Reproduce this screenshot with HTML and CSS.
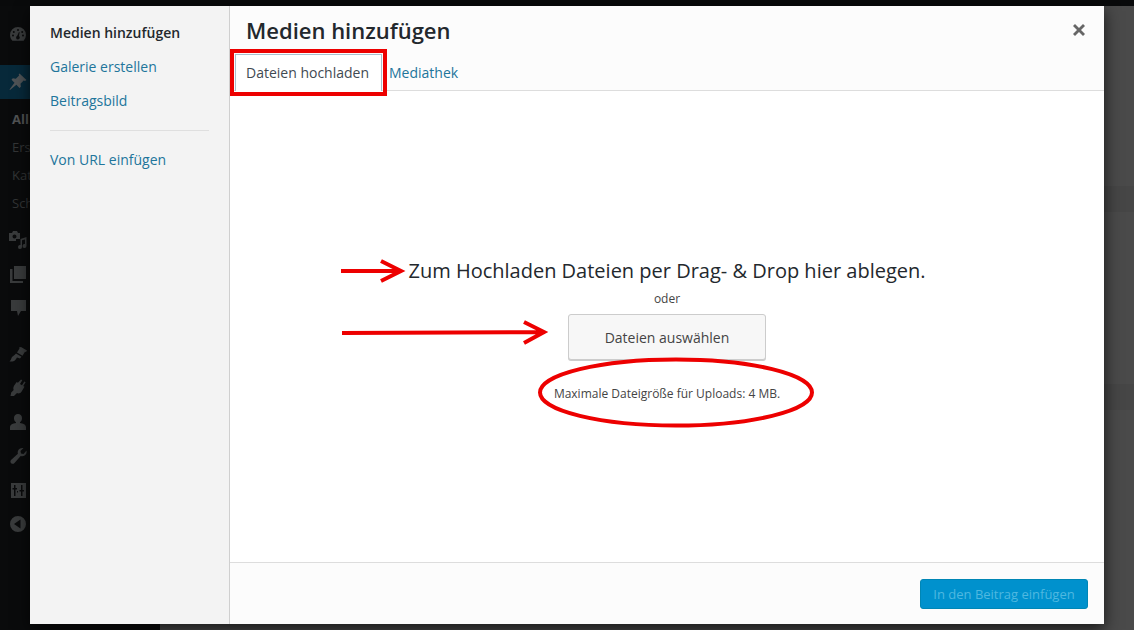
FILE: index.html
```html
<!DOCTYPE html>
<html lang="de">
<head>
  <meta charset="UTF-8" />
  <title>Medien hinzufügen</title>
  <link rel="stylesheet" href="styles.css">
</head>
<body>
  <div class="adminbar"></div>
  <div class="admin">
    <nav class="menu">
      <div class="menu-item">
        <svg viewBox="0 0 20 20"><path d="M10 2a8 8 0 0 0-8 8c0 2.200.9 4.300 2.400 5.700h11.200A8 8 0 0 0 18 10a8 8 0 0 0-8-8zM10 4a1 1 0 1 1 0 2 1 1 0 0 1 0-2zM5.800 6a1 1 0 1 1 0 2 1 1 0 0 1 0-2zM14.200 6a1 1 0 1 1 0 2 1 1 0 0 1 0-2zM4 10.500a1 1 0 1 1 2 0 1 1 0 0 1-2 0zM14 10.500a1 1 0 1 1 2 0 1 1 0 0 1-2 0zM10 14.500a2 2 0 0 1-.8-3.800L11 7l.6.3-.6 3.600a2 2 0 0 1-1 3.600z"/></svg>
      </div>
      <div class="menu-item current">
        <svg viewBox="0 0 20 20"><path d="M11.500 1.500l7 6.500-1.500 1-1.300-.4-3.200 3.200.4 3-1.400 1.300-3.100-3.300L2 18l-.5-.5 5-6.700-3-3 1.300-1.500 3 .4 3.300-3.200-.4-1.300z"/></svg>
      </div>
      <ul class="submenu">
        <li class="active">All</li>
        <li>Ers</li>
        <li>Kat</li>
        <li>Sch</li>
      </ul>
      <div class="menu-item">
        <svg viewBox="0 0 20 20"><path d="M1 3h3l1-2h4l1 2h2v6H8v2H1zM6.500 4.500a2 2 0 1 0 0 4 2 2 0 0 0 0-4zM18.500 7v9a2 2 0 1 1-1.500-1.900V9.500l-3 .8V17a2 2 0 1 1-1.500-1.900V9z"/></svg>
      </div>
      <div class="menu-item">
        <svg viewBox="0 0 20 20"><path d="M6 2h12v13H6zM2 5h2.500v12H15v2H2z"/></svg>
      </div>
      <div class="menu-item gap">
        <svg viewBox="0 0 20 20"><path d="M3 2h15v11h-5l-3 5-1-5H3z"/></svg>
      </div>
      <div class="menu-item">
        <svg viewBox="0 0 20 20"><path d="M13 3l6 3.500-1 1.500-1-.3-2.500 4-5.500-3.300 2.500-4-.5-1zM8 9.500l5.500 3.300-1.500 1.800-3-1c-1 1.500-2 4-4.500 4H1.500c1.500-1 1.500-3 2.500-4.500l2.500-2z"/></svg>
      </div>
      <div class="menu-item">
        <svg viewBox="0 0 20 20"><path d="M13 1.500l1.300.8-2.300 3.700 2 1.200 2.300-3.700 1.300.8-2.300 3.700 1.200.8-3 5c-1 1.600-3 2-4.500 1.300L6 18H2.500l.7-3.500 2.500-2.500c-.7-1.500-.4-3 .5-4.500l2.500-3.500 1.200.8z"/></svg>
      </div>
      <div class="menu-item">
        <svg viewBox="0 0 20 20"><path d="M10 2a4 4 0 0 1 4 4.500c0 1.500-.8 3-2 3.700v.8c3 .5 6 1.500 6 4V18H2v-3c0-2.500 3-3.500 6-4v-.8c-1.200-.7-2-2.200-2-3.700A4 4 0 0 1 10 2z"/></svg>
      </div>
      <div class="menu-item">
        <svg viewBox="0 0 20 20"><path d="M18.500 4.500c.5 2-.2 4-1.800 5-1.200.8-2.700.9-4 .4L6.500 17c-.8 1-2.300 1.200-3.300.3s-1-2.300-.2-3.200l6.900-6.300c-.4-1.300-.2-2.800.7-4 1.100-1.500 3-2.200 4.900-1.700L12.500 5l.5 2.500 2.500.5z"/></svg>
      </div>
      <div class="menu-item">
        <svg viewBox="0 0 20 20"><path fill-rule="evenodd" d="M3 3h15v15H3zM6 5v3H4.500v1.500H6V16h1.500V9.500H9V8H7.500V5zM13 5v5h-1.500v1.500H13V16h1.500v-4.500H16V10h-1.500V5zM9 11v1.500h1V11z"/></svg>
      </div>
      <div class="menu-item">
        <svg viewBox="0 0 20 20"><path fill-rule="evenodd" d="M10 2a8 8 0 1 1 0 16 8 8 0 0 1 0-16zM12.500 5.500L6 10l6.500 4.500z"/></svg>
      </div>
    </nav>
    <main class="wpbody">
      <div class="stripe"></div>
      <div class="stripe"></div>
    </main>
  </div>

  <div class="modal">
    <aside class="media-menu">
      <a class="media-link selected">Medien hinzufügen</a>
      <a class="media-link">Galerie erstellen</a>
      <a class="media-link">Beitragsbild</a>
      <div class="separator"></div>
      <a class="media-link">Von URL einfügen</a>
    </aside>
    <section class="frame">
      <button class="close" aria-label="Schließen">
        <svg viewBox="0 0 14 14" width="14" height="14"><path d="M3 1l4 4 4-4 2 2-4 4 4 4-2 2-4-4-4 4-2-2 4-4-4-4z"/></svg>
      </button>
      <h1 class="frame-title">Medien hinzufügen</h1>
      <div class="tabs">
        <a class="tab active">Dateien hochladen</a>
        <a class="tab">Mediathek</a>
      </div>
      <div class="uploader">
        <h2 class="drop-text">Zum Hochladen Dateien per Drag- &amp; Drop hier ablegen.</h2>
        <p class="or">oder</p>
        <button class="select-btn">Dateien auswählen</button>
        <p class="max-size">Maximale Dateigröße für Uploads: 4 MB.</p>
      </div>
      <div class="toolbar">
        <button class="insert-btn">In den Beitrag einfügen</button>
      </div>
    </section>
  </div>

  <!-- hand drawn annotations on top of the screenshot -->
  <svg class="marks" width="1134" height="630" viewBox="0 0 1134 630">
    <rect x="232" y="51" width="153" height="43"/>
    <path d="M341 271H400M381 261L401 271L381 281"/>
    <path d="M342 333L543 332M524 322L544 332L524 343"/>
    <ellipse cx="676" cy="392.500" rx="136" ry="33"/>
  </svg>
</body>
</html>
```

FILE: styles.css
```css
* { box-sizing: border-box; }

html, body { height: 100%; }

body {
  margin: 0;
  font-family: "Open Sans", sans-serif;
  background: #4a4a4a;
  overflow: hidden;
  position: relative;
}

.adminbar { height: 6px; background: #090a0b; }

.admin { display: flex; height: 624px; }

.menu {
  width: 160px;
  flex: none;
  background: #0a0b0c;
  padding-top: 12px;
}
.menu-item { height: 34px; padding-left: 8px; display: flex; align-items: center; }
.menu-item svg { width: 20px; height: 20px; fill: #393b3c; }
.menu-item.current { background: #07293a; margin-top: 13px; }
.menu-item.current svg { fill: #4f5356; }
.menu-item.gap { margin-bottom: 12px; }

.submenu { list-style: none; margin: 0; padding: 6px 0; font-size: 13px; color: #333536; }
.submenu li { height: 28px; line-height: 28px; padding-left: 12px; white-space: nowrap; }
.submenu .active { font-weight: 700; color: #505253; }

.wpbody { flex: 1; padding-top: 180px; }
.stripe { height: 26px; margin-bottom: 172px; background: #464646; }

.modal {
  position: absolute;
  left: 30px;
  top: 6px;
  width: 1074px;
  height: 618px;
  display: flex;
  background: #fff;
  box-shadow: 0 5px 15px rgba(0, 0, 0, 0.7);
}

.media-menu {
  width: 200px;
  flex: none;
  background: #f3f3f3;
  border-right: 1px solid #cfcfcf;
  padding: 10px 20px 0;
}
.media-link { display: block; height: 34px; font-size: 14px; line-height: 34px; color: #21759b; }
.media-link.selected { color: #23282d; font-weight: 600; }
.separator { height: 1px; background: #dfdfdf; margin: 12px 0 12px; }

.frame { flex: 1; position: relative; display: flex; flex-direction: column; min-width: 0; background: #fcfcfc; }

.close {
  position: absolute;
  right: 18px;
  top: 17px;
  width: 14px;
  height: 14px;
  padding: 0;
  border: 0;
  background: none;
}
.close svg { display: block; fill: #666; }

.frame-title { margin: 0; padding: 6px 16px 0; height: 44px; font-size: 22px; font-weight: 600; line-height: 36px; color: #23282d; }

.tabs { display: flex; height: 41px; padding-left: 5px; border-bottom: 1px solid #ddd; }
.tab { height: 38px; margin-top: 4px; padding: 0 10px 0 7px; font-size: 14px; line-height: 38px; color: #21759b; }
.tab.active { width: 147px; padding-left: 10px; background: #fff; border: 1px solid #a9bfce; line-height: 36px; color: #3f4a52; }

.uploader { flex: 1; background: #fff; text-align: center; padding-top: 165px; }
.drop-text { margin: 0; font-size: 20px; font-weight: 400; line-height: 30px; color: #23282d; }
.or { margin: 3px 0 0; font-size: 12px; line-height: 20px; color: #444; }
.select-btn {
  display: block;
  width: 198px;
  height: 46px;
  margin: 5px auto 0;
  border: 1px solid #ccc;
  border-radius: 3px;
  background: #f7f7f7;
  box-shadow: 0 1px 0 #ccc;
  font: 14px "Open Sans", sans-serif;
  color: #444;
}
.max-size { margin: 25px 0 0; font-size: 12px; line-height: 18px; color: #444; }

.toolbar {
  height: 62px;
  flex: none;
  display: flex;
  justify-content: flex-end;
  padding: 16px 16px 0;
  border-top: 1px solid #ddd;
}
.insert-btn {
  width: 168px;
  height: 30px;
  border: 1px solid #0086b5;
  border-radius: 3px;
  background: #0091cd;
  font: 13px "Open Sans", sans-serif;
  color: #4fb8e0;
}

.marks { position: absolute; left: 0; top: 0; fill: none; stroke: #ed0000; stroke-width: 4; pointer-events: none; }
```
